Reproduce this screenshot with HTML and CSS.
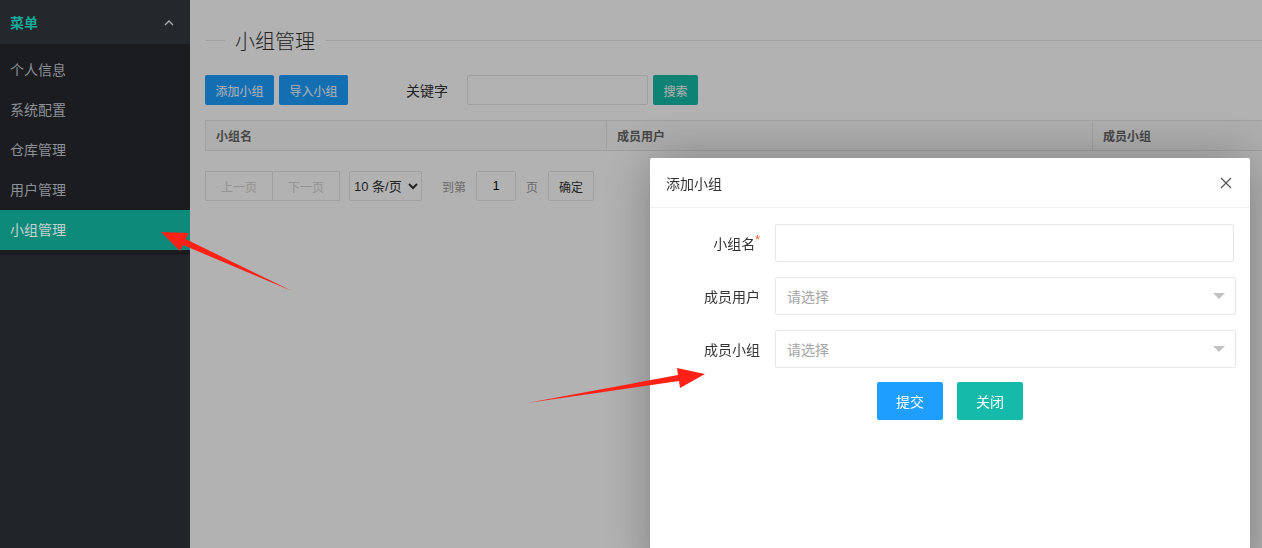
FILE: index.html
```html
<!DOCTYPE html>
<html>
<head>
    <title>小组管理</title>
    <meta charset="utf-8">
    <link rel="stylesheet" href="styles.css">
</head>
<body>
    <div class="layout">
        <!-- 侧边菜单 -->
        <aside class="side">
            <div class="side-head">
                <span>菜单</span>
                <svg width="10" height="7" viewBox="0 0 10 7"><polyline points="1,6 5,2 9,6" fill="none" stroke="#a9acb0" stroke-width="1.4"/></svg>
            </div>
            <ul class="side-menu">
                <li>个人信息</li>
                <li>系统配置</li>
                <li>仓库管理</li>
                <li>用户管理</li>
                <li class="active">小组管理</li>
            </ul>
        </aside>

        <!-- 主体 -->
        <main class="main">
            <fieldset class="page-title">
                <legend>小组管理</legend>
            </fieldset>

            <div class="toolbar">
                <button class="btn-sm">添加小组</button>
                <button class="btn-sm">导入小组</button>
                <span class="kw-label">关键字</span>
                <input class="kw-input" type="text">
                <button class="btn-sm btn-teal">搜索</button>
            </div>

            <table class="grid">
                <colgroup>
                    <col style="width: 401px">
                    <col style="width: 486px">
                    <col style="width: 400px">
                </colgroup>
                <thead>
                    <tr>
                        <th>小组名</th>
                        <th>成员用户</th>
                        <th>成员小组</th>
                    </tr>
                </thead>
            </table>

            <div class="pager">
                <span class="pg-btn">上一页</span>
                <span class="pg-btn">下一页</span>
                <select class="pg-limit">
                    <option>10 条/页</option>
                    <option>20 条/页</option>
                </select>
                <span class="pg-text pg-goto">到第</span>
                <input class="pg-input" type="text" value="1">
                <span class="pg-text">页</span>
                <button class="pg-ok">确定</button>
            </div>
        </main>
    </div>

    <!-- 弹窗遮罩 -->
    <div class="shade"></div>

    <div class="dialog">
        <div class="dialog-head">
            <span>添加小组</span>
            <svg width="12" height="12" viewBox="0 0 12 12"><path d="M1 1 L11 11 M11 1 L1 11" stroke="#555" stroke-width="1.2"/></svg>
        </div>
        <div class="dialog-body">
            <div class="form-row">
                <label>小组名<i class="req">*</i></label>
                <input class="field field-text" type="text">
            </div>
            <div class="form-row">
                <label>成员用户</label>
                <div class="field field-select">请选择</div>
            </div>
            <div class="form-row">
                <label>成员小组</label>
                <div class="field field-select">请选择</div>
            </div>
            <div class="form-btns">
                <button class="btn btn-blue">提交</button>
                <button class="btn btn-green">关闭</button>
            </div>
        </div>
    </div>

    <!-- 标注箭头 -->
    <svg class="marks" width="1262" height="548" viewBox="0 0 1262 548">
        <polygon points="292,291 185.5,239 189,233 161,232 180,251 183,245" fill="#ff2116"/>
        <polygon points="527,403 678,375 677,368 705,374 680,388 679,381" fill="#ff2116"/>
    </svg>
</body>
</html>
```

FILE: styles.css
```css
body {
    margin: 0;
    font-family: "Helvetica Neue", "Liberation Sans", "Noto Sans CJK SC", sans-serif;
    font-size: 14px;
    color: #333;
    overflow: hidden;
}

.layout {
    display: flex;
    height: 100vh;
}

/* 侧边菜单 */
.side {
    width: 190px;
    flex: none;
    background: #212428;
}

.side-head {
    height: 44px;
    display: flex;
    align-items: center;
    justify-content: space-between;
    padding: 0 16px 0 10px;
    background: #24282c;
    color: #17a999;
    font-weight: bold;
}

.side-menu {
    list-style: none;
    margin: 0;
    padding: 6px 0 5px;
    background: #1a1c20;
}

.side-menu li {
    height: 40px;
    line-height: 40px;
    padding-left: 10px;
    color: #8e9195;
}

.side-menu li.active {
    background: #0e8a7b;
    color: #c3d2cf;
}

/* 主体 */
.main {
    flex: 1;
    min-width: 0;
    padding: 24px 0 0 15px;
    background: #fff;
    overflow: hidden;
}

.page-title {
    margin: 0 0 19px;
    padding: 0;
    border: 0;
    border-top: 1px solid #e6e6e6;
}

.page-title legend {
    margin-left: 20px;
    padding: 4px 10px 0;
    font-size: 20px;
    font-weight: 300;
    line-height: 28px;
}

.toolbar {
    display: flex;
    align-items: center;
    height: 30px;
}

.btn-sm {
    height: 30px;
    padding: 0 10.5px;
    border: 0;
    border-radius: 2px;
    background: #1e9fff;
    color: #fff;
    font-family: inherit;
    font-size: 12px;
}

.btn-sm + .btn-sm {
    margin-left: 5px;
}

.btn-teal {
    margin-left: 5px;
    background: #16baaa;
}

.kw-label {
    margin: 0 19px 0 58px;
}

.kw-input {
    width: 181px;
    height: 30px;
    box-sizing: border-box;
    border: 1px solid #e6e6e6;
    border-radius: 2px;
}

/* 表格 */
.grid {
    margin-top: 15px;
    border-collapse: collapse;
    table-layout: fixed;
    width: 1287px;
}

.grid th {
    height: 29px;
    padding: 0 10px;
    border: 1px solid #e6e6e6;
    background: #fafafa;
    text-align: left;
    font-size: 12px;
    color: #666;
}

/* 分页 */
.pager {
    display: flex;
    align-items: center;
    margin-top: 20px;
    font-size: 12px;
}

.pg-btn {
    width: 68px;
    height: 30px;
    box-sizing: border-box;
    display: flex;
    align-items: center;
    justify-content: center;
    border: 1px solid #e6e6e6;
    background: #fff;
    color: #d2d2d2;
}

.pg-btn + .pg-btn {
    margin-left: -1px;
}

.pg-limit {
    width: 73px;
    height: 30px;
    margin-left: 9px;
    border: 1px solid #e6e6e6;
    border-radius: 2px;
    background: #fff;
    color: #333;
    font-family: inherit;
    font-size: 13px;
}

.pg-text {
    color: #999;
}

.pg-goto {
    margin-left: 20px;
}

.pg-input {
    width: 40px;
    height: 30px;
    box-sizing: border-box;
    margin: 0 10px;
    border: 1px solid #e6e6e6;
    border-radius: 2px;
    text-align: center;
    font-family: inherit;
    font-size: 12px;
}

.pg-ok {
    height: 30px;
    margin-left: 10px;
    padding: 0 10px;
    border: 1px solid #e6e6e6;
    border-radius: 2px;
    background: #fff;
    color: #333;
    font-family: inherit;
    font-size: 12px;
}

/* 弹窗 */
.shade {
    position: fixed;
    left: 190px;
    top: 0;
    right: 0;
    bottom: 0;
    background: rgba(0, 0, 0, 0.3);
}

.dialog {
    position: fixed;
    left: 650px;
    top: 158px;
    width: 600px;
    height: 420px;
    background: #fff;
    border-radius: 2px;
    box-shadow: 1px 1px 50px rgba(0, 0, 0, 0.3);
}

.dialog-head {
    height: 50px;
    box-sizing: border-box;
    display: flex;
    align-items: center;
    justify-content: space-between;
    padding: 0 18px 0 16px;
    border-bottom: 1px solid #f0f0f0;
}

.dialog-body {
    padding-top: 16px;
}

.form-row {
    display: flex;
    align-items: center;
    margin-bottom: 15px;
}

.form-row label {
    width: 110px;
    flex: none;
    text-align: right;
}

.req {
    font-style: normal;
    font-size: 12px;
    color: #ff5722;
    vertical-align: top;
    line-height: 14px;
}

.field {
    width: 461px;
    height: 38px;
    box-sizing: border-box;
    margin-left: 15px;
    border: 1px solid #e6e6e6;
    border-radius: 2px;
    background: #fff;
}

.field-text {
    width: 459px;
}

.field-select {
    position: relative;
    display: flex;
    align-items: center;
    padding-left: 11px;
    color: #a5a5a5;
}

.field-select::after {
    content: "";
    position: absolute;
    right: 10px;
    top: 50%;
    margin-top: -3px;
    border: 6px solid transparent;
    border-top-color: #c2c2c2;
}

.form-btns {
    display: flex;
    justify-content: center;
    gap: 14px;
    margin-top: -1px;
}

.btn {
    height: 38px;
    padding: 0 19px;
    border: 0;
    border-radius: 2px;
    color: #fff;
    font-family: inherit;
    font-size: 14px;
}

.btn-blue {
    background: #1e9fff;
}

.btn-green {
    background: #16baaa;
}

/* 标注 */
.marks {
    position: fixed;
    left: 0;
    top: 0;
    pointer-events: none;
}
```
